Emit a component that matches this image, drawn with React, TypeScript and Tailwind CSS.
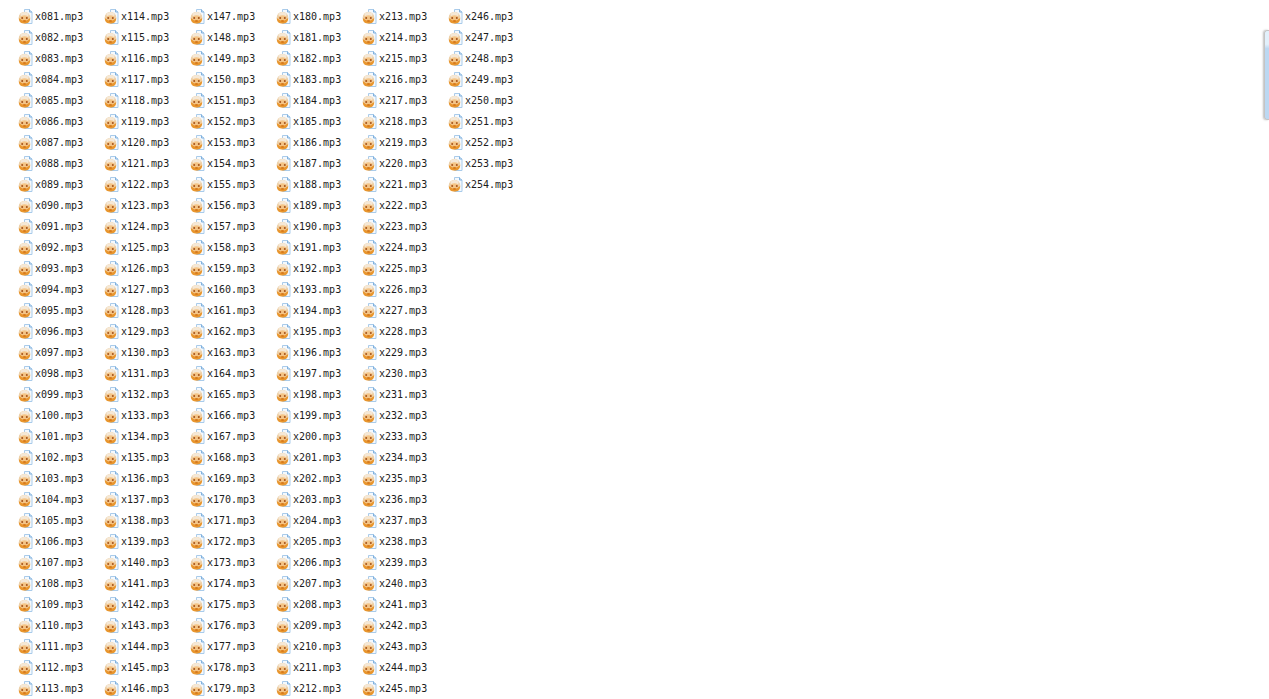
const files = Array.from({ length: 254 - 81 + 1 }, (_, i) => `x${String(i + 81).padStart(3, '0')}.mp3`);

function Mp3Icon() {
  return (
    <svg width="16" height="16" viewBox="0 0 16 16" className="shrink-0 blur-[0.3px]">
      {/* page */}
      <path d="M7.500 0.500H12.500L15 3V14.500H7.500Z" fill="#f4f9fe" stroke="#a9cbea" />
      <path d="M12.500 0.500V3H15" fill="#d3e5f6" stroke="#7fb0dd" />
      {/* hair */}
      <ellipse cx="7.500" cy="8.500" rx="5.800" ry="5.800" fill="#eccfa6" />
      <ellipse cx="7.500" cy="5.500" rx="4" ry="2.600" fill="#f5e8d6" />
      {/* face */}
      <path d="M1.800 9C1.800 13.500 4.500 14.500 7.500 14.500C10.500 14.500 13.200 13.500 13.200 9C11 11.500 4 11.500 1.800 9Z" fill="#e8962e" />
      <ellipse cx="7.500" cy="9" rx="4" ry="2.800" fill="#f4c486" />
      <circle cx="5.200" cy="9" r="1" fill="#a4521a" />
      <circle cx="9.800" cy="9" r="1" fill="#a4521a" />
      <ellipse cx="7.500" cy="12" rx="1.600" ry="0.900" fill="#d87a1c" />
    </svg>
  );
}

export default function App() {
  return (
    <div className="relative h-[699px] overflow-hidden bg-white font-['DejaVu_Sans_Mono',monospace] text-[10px] text-[#1c1c1c]">
      <div className="grid grid-flow-col grid-rows-[repeat(33,21px)] auto-cols-[86px] pl-[17px] pt-[6px]">
        {files.map((name) => (
          <div key={name} className="flex items-center gap-[2px]">
            <Mp3Icon />
            <span className="whitespace-nowrap">{name}</span>
          </div>
        ))}
      </div>

      {/* collapsed side tab at the window edge */}
      <div className="absolute right-0 top-[30px] h-[90px] w-[5px] rounded-l-[3px] border-y border-l border-[#c4c4c4] bg-gradient-to-b from-[#e2f0fb] from-15% to-[#bcd8f2] to-20% shadow-[-1px_0_2px_rgba(0,0,0,0.25)]" />
    </div>
  );
}
